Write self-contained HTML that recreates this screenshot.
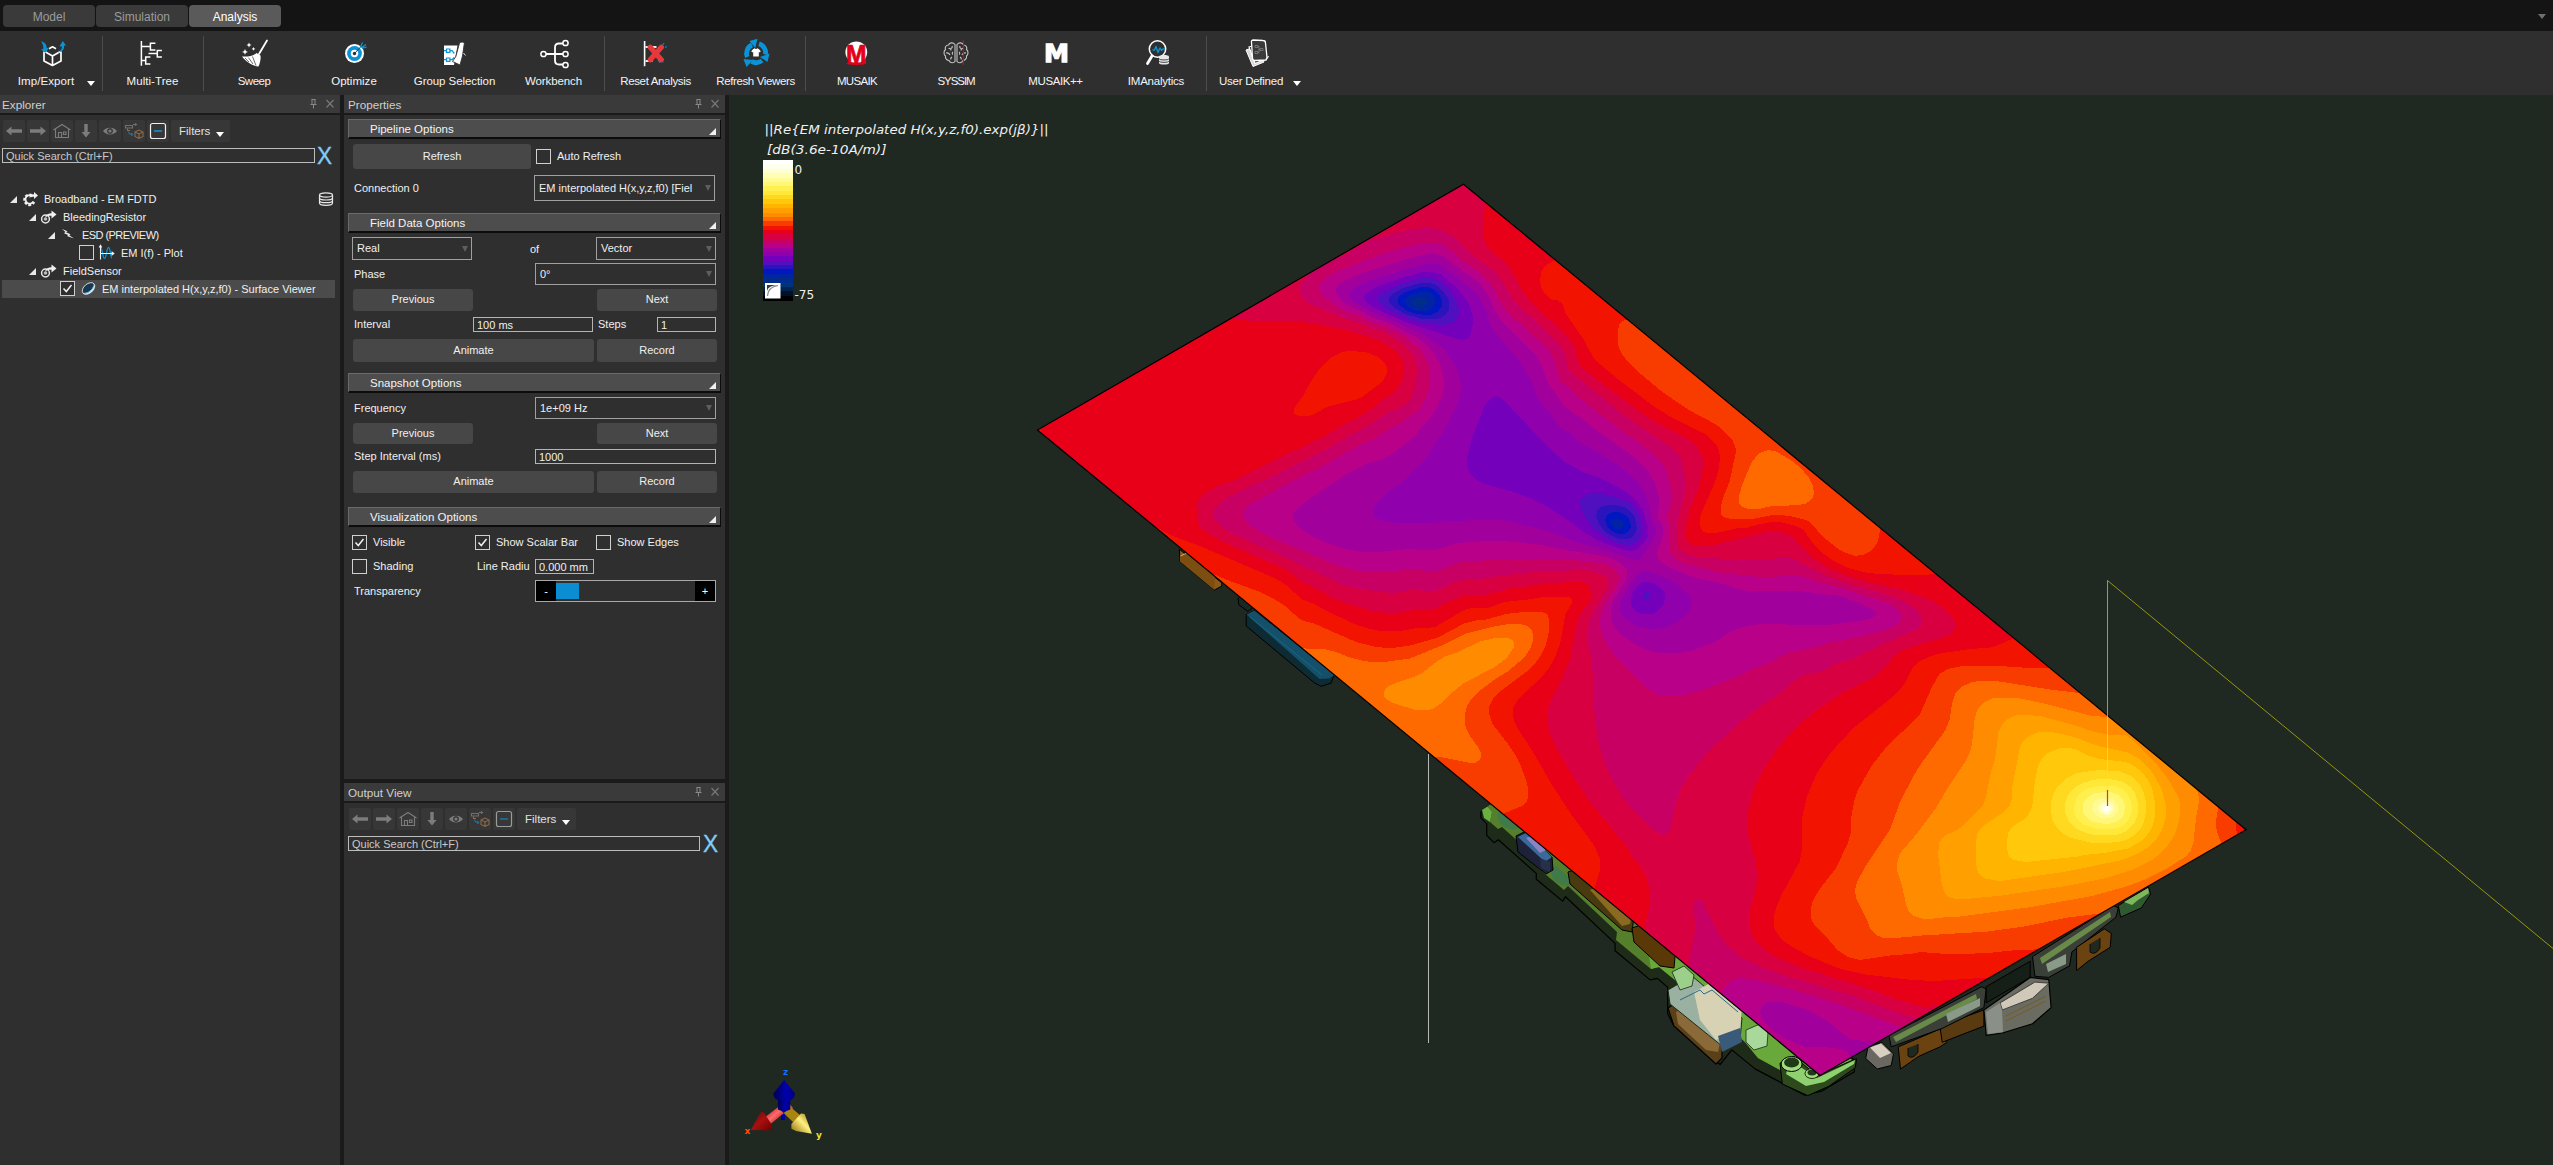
<!DOCTYPE html>
<html lang="en"><head><meta charset="utf-8"><title>Analysis</title>
<style>
*{box-sizing:border-box;margin:0;padding:0}
html,body{width:2553px;height:1165px;overflow:hidden;background:#2f2f2f}
body{position:relative;font-family:"Liberation Sans",sans-serif;font-size:11px;color:#f0f0f0;line-height:14px}
.a{position:absolute;white-space:nowrap}
.topbar{left:0;top:0;width:2553px;height:31px;background:#141414}
.tab{top:5px;height:22px;width:92px;border-radius:4px;background:#3a3a3a;color:#9c9c9c;text-align:center;line-height:24px;font-size:12px}
.tab.on{background:#5a5a5a;color:#fff}
.tool{top:31px;left:0;width:2553px;height:64px;background:#2f2f2f}
.sep{top:36px;width:1px;height:55px;background:#4c4c4c}
.tl{top:74px;height:14px;text-align:center;font-size:11.5px;color:#f4f4f4;transform:translateX(-50%)}
.ic{overflow:visible}
.title{height:18px;background:#3a3a3a;color:#cfcfcf;line-height:20px;padding-left:2px;font-size:11.7px}
.dark{background:#1a1a1a}
.ib{width:22px;height:22px;background:#373737;border-radius:2px}
.hdr{left:348px;width:373px;height:20px;background:#4d4d4d;border-top:1px solid #6a6a6a;border-left:1px solid #6a6a6a;border-bottom:2px solid #0c0c0c;border-right:1px solid #0c0c0c;line-height:18.5px;padding-left:21px;color:#f4f4f4;font-size:11.5px}
.hdr:after{content:"";position:absolute;right:4px;bottom:2px;border-left:7px solid transparent;border-bottom:7px solid #f0f0f0}
.btn{background:#474747;border-radius:3px;text-align:center;color:#f0f0f0;font-size:11px}
.cmb{border:1px solid #a0a0a0;background:#2f2f2f;padding-left:4px;color:#f0f0f0}
.cmb:after{content:"";position:absolute;right:3px;top:50%;margin-top:-3px;border-left:3.5px solid transparent;border-right:3.5px solid transparent;border-top:6px solid #5e5e5e}
.inp{border:1px solid #b4b4b4;background:#2f2f2f;padding-left:3px;color:#f0f0f0}
.cb{width:15px;height:15px;border:1px solid #d0d0d0;background:#2f2f2f}
.lbl{color:#f0f0f0;height:14px;line-height:14px}
.arr{width:0;height:0;border-left:6px solid transparent;border-bottom:6px solid #e8e8e8}
.dd{width:0;height:0;border-left:4.5px solid transparent;border-right:4.5px solid transparent;border-top:5px solid #fff}
.row{height:18px;line-height:18px;color:#f0f0f0}
</style></head><body>
<div class="a topbar"></div>
<div class="a tab" style="left:3px">Model</div>
<div class="a tab" style="left:96px">Simulation</div>
<div class="a tab on" style="left:189px">Analysis</div>
<div class="a dd" style="left:2538px;top:14px;border-top-color:#707070"></div>
<div class="a tool"></div>
<div class="a sep" style="left:102px"></div>
<div class="a sep" style="left:203px"></div>
<div class="a sep" style="left:604px"></div>
<div class="a sep" style="left:805px"></div>
<div class="a sep" style="left:1206px"></div>
<div class="a tl" style="left:46px;letter-spacing:0.11px">Imp/Export</div><div class="a dd" style="left:87px;top:81px"></div>
<div class="a tl" style="left:152.5px;letter-spacing:0.05px">Multi-Tree</div>
<div class="a tl" style="left:254px;letter-spacing:-0.52px">Sweep</div>
<div class="a tl" style="left:354px;letter-spacing:0.04px">Optimize</div>
<div class="a tl" style="left:454.5px;letter-spacing:-0.07px">Group Selection</div>
<div class="a tl" style="left:553.5px;letter-spacing:-0.11px">Workbench</div>
<div class="a tl" style="left:655.5px;letter-spacing:-0.34px">Reset Analysis</div>
<div class="a tl" style="left:755.5px;letter-spacing:-0.37px">Refresh Viewers</div>
<div class="a tl" style="left:857px;letter-spacing:-0.67px">MUSAIK</div>
<div class="a tl" style="left:956px;letter-spacing:-1.05px">SYSSIM</div>
<div class="a tl" style="left:1055.5px;letter-spacing:-0.4px">MUSAIK++</div>
<div class="a tl" style="left:1156px;letter-spacing:-0.23px">IMAnalytics</div>
<div class="a tl" style="left:1251px;letter-spacing:-0.25px">User Defined</div><div class="a dd" style="left:1293px;top:81px"></div>
<!-- toolbar icons -->
<svg class="a ic" style="left:38px;top:39px" width="30" height="30" viewBox="0 0 30 30">
 <path d="M6 12.500 V22 L14.500 26.500 L23 22 V12.500 M6.200 12.300 L14.500 17 L22.800 12.300 M14.500 17 V26 M11 9.700 L14.500 7.800 L18 9.700" fill="none" stroke="#fff" stroke-width="1.700" stroke-linejoin="round"/>
 <path d="M3 2.200 C7.500 3.500 9 6.500 8.700 9.300 L10.800 8.800 L7.300 14 L3 10.300 L5.300 9.900 C5.600 7.500 5 4.800 3 2.200 Z" fill="#0a93d6"/>
 <path d="M19.500 13.800 C23 12 24.200 9.500 23.800 7.200 L21.400 7.600 L24.800 2 L28 6.500 L26 6.800 C26.500 10 24.500 13 19.500 13.800 Z" fill="#0a93d6"/>
</svg>
<svg class="a ic" style="left:138px;top:39px" width="28" height="30" viewBox="0 0 28 30">
 <path d="M3.400 2.100 V26.800 M3.400 7.600 H11.700 M17.400 4.200 H12.400 V10.900 H17.400 M10.500 14.600 H18.600 M23.900 11.400 H19.300 V18 H23.900 M3.400 21.500 H7.400 M12.400 18 H7.700 V24.900 H12.400" fill="none" stroke="#fff" stroke-width="1.500"/>
</svg>
<svg class="a ic" style="left:240px;top:39px" width="30" height="30" viewBox="0 0 30 30">
 <path d="M27 1.5 L19 15" stroke="#fff" stroke-width="1.8" fill="none" stroke-linecap="round"/>
 <path d="M16.5 14 L20.5 16.5 C21 20 20 24 18.5 27.5 C13 27 6 23 2 17.5 C7 18 13 17 16.5 14 Z" fill="#fff"/>
 <path d="M5 19 L9 23 M8.5 18.7 L13 25 M12.5 17.5 L16 26.5" stroke="#2f2f2f" stroke-width="0.7" fill="none"/>
 <path d="M9 3.5 l0.8 1.7 1.7 0.8 -1.7 0.8 -0.8 1.7 -0.8 -1.7 -1.7 -0.8 1.7 -0.8z M5 10 l0.9 2 2 0.9 -2 0.9 -0.9 2 -0.9 -2 -2 -0.9 2 -0.9z M13.5 8 l0.6 1.3 1.3 0.6 -1.3 0.6 -0.6 1.3 -0.6 -1.3 -1.3 -0.6 1.3 -0.6z" fill="#fff"/>
</svg>
<svg class="a ic" style="left:340px;top:39px" width="30" height="30" viewBox="0 0 30 30">
 <circle cx="14.500" cy="14.500" r="9.500" fill="#fff"/>
 <circle cx="14.500" cy="14.500" r="7.400" fill="#0a93d6"/>
 <circle cx="14.500" cy="14.500" r="3.700" fill="#fff"/>
 <circle cx="14.500" cy="14.500" r="1.700" fill="#2f2f2f"/>
 <path d="M14.500 14.500 L21.500 7" stroke="#2f2f2f" stroke-width="0.900" fill="none"/>
 <path d="M20.500 8 L22.500 3.500 M21.500 8.500 L26 5.500 M22 9 L26.500 8.200" stroke="#0a93d6" stroke-width="1.300" fill="none"/>
</svg>
<svg class="a ic" style="left:440px;top:39px" width="30" height="30" viewBox="0 0 30 30">
 <path d="M4 6.500 H17.500 L14 26 H4 Z" fill="#fff"/>
 <path d="M19.500 4 C21 2.700 23.500 2.700 24.300 4.500 L22.500 17 L20 26 L12.500 22.500 L15.800 17.500 Z" fill="#fff" stroke="#2f2f2f" stroke-width="0.900"/>
 <path d="M23.500 14 L25.500 16.500" stroke="#ddd" stroke-width="1" fill="none"/>
 <path d="M6.500 10 h3.400 v3.400 h-3.400 z M6.500 19 h3.400 v3.400 h-3.400 z M9.900 11.700 H12 L14.300 14.500 M9.900 20.700 H12 L14.300 18.500 M4 11.700 H6.500 M4 20.700 H6.500" fill="none" stroke="#0a93d6" stroke-width="1.200"/>
</svg>
<svg class="a ic" style="left:539px;top:38px" width="32" height="32" viewBox="0 0 32 32">
 <path d="M6 16 H26 M25 5.500 H20 C17.5 5.5 16 7 16 9.500 V22.5 C16 25 17.5 26.500 20 26.500 H25" fill="none" stroke="#fff" stroke-width="1.8"/>
 <circle cx="4.500" cy="16" r="2.6" fill="#2f2f2f" stroke="#fff" stroke-width="1.5"/>
 <circle cx="26.500" cy="5" r="2.6" fill="#2f2f2f" stroke="#fff" stroke-width="1.5"/>
 <circle cx="26.500" cy="16" r="2.6" fill="#2f2f2f" stroke="#fff" stroke-width="1.5"/>
 <circle cx="26.500" cy="27" r="2.6" fill="#2f2f2f" stroke="#fff" stroke-width="1.5"/>
</svg>
<svg class="a ic" style="left:640px;top:39px" width="30" height="30" viewBox="0 0 30 30">
 <path d="M4.600 2 V27.200" stroke="#fff" stroke-width="1.600" fill="none"/>
 <path d="M5.500 7 H16.500 V9 H5.500 Z M5.500 21 H12.500 V23 H5.500 Z" fill="#e8e8e8"/>
 <path d="M22.500 6.500 L24 4 M25 8.500 L27 7.500 M21 19 L23 23.500 M18 21 L20 24" stroke="#0a93d6" stroke-width="1" fill="none"/>
 <path d="M10.200 8.200 L21.300 20.800 M21.300 8.200 L10.200 20.800" stroke="#e8383c" stroke-width="5.200" fill="none" stroke-linecap="round"/>
</svg>
<svg class="a ic" style="left:741px;top:38px" width="32" height="32" viewBox="0 0 32 32">
 <g fill="none" stroke="#0a93d6" stroke-width="4.800">
  <path d="M6.300 19 A9.200 9.200 0 0 1 11 7"/>
  <path d="M18 5.800 A9.200 9.200 0 0 1 24.400 16.500"/>
  <path d="M21 22.500 A9.200 9.200 0 0 1 10.500 23.400"/>
 </g>
 <path d="M8.500 3 L16.500 0.800 L14.200 10 Z M28.500 15.500 L26.500 24 L19 19 Z M5.500 29 L2.500 21 L12 22 Z" fill="#0a93d6"/>
 <path d="M12 11.200 L13.700 10.300 C14.300 11.300 15.700 11.300 16.300 10.300 L18 11.200 L19.800 13.200 L18.500 14.400 L17.800 13.800 V18.600 H12.200 V13.800 L11.500 14.400 L10.200 13.200 Z" fill="#fff"/>
</svg>
<svg class="a ic" style="left:842px;top:39px" width="30" height="30" viewBox="0 0 30 30">
 <circle cx="14.300" cy="13.300" r="10.900" fill="#fff"/>
 <ellipse cx="14.300" cy="24.600" rx="10.200" ry="1.300" fill="#e2001a"/>
 <text x="14.300" y="24.400" text-anchor="middle" font-family="Liberation Sans, sans-serif" font-weight="700" font-size="25" fill="#e2001a" stroke="#e2001a" stroke-width="0.700" textLength="20.500" lengthAdjust="spacingAndGlyphs">M</text>
</svg>
<svg class="a ic" style="left:941px;top:39px" width="30" height="30" viewBox="0 0 30 30">
 <g fill="none" stroke="#c4c4c4" stroke-width="1.1">
  <path d="M14 5.500 C12 3 8.500 3.500 7.500 6 C5 6 3.500 8.500 4.500 10.500 C2.500 12 2.500 15.500 4.500 17 C4 19.500 6 21.500 8 21.500 C9 24 12.500 24.500 14 22.500 Z"/>
  <path d="M16 5.500 C18 3 21.500 3.500 22.500 6 C25 6 26.500 8.500 25.500 10.500 C27.500 12 27.500 15.500 25.500 17 C26 19.500 24 21.500 22 21.500 C21 24 17.500 24.500 16 22.500 Z"/>
  <path d="M7.500 9.500 C9 9 10 10 10 11.500 M5 14 C7 13.500 8.500 14.500 9 16 M11 18 C10 18.500 9.500 19.500 10 20.500 M11 7 C11.500 8 11 9 10 9.500 M12 13 C11 13.500 11 15 12 15.500"/>
  <path d="M22.500 9.500 C21 9 20 10 20 11.500 M25 14 C23 13.500 21.500 14.500 21 16 M19 18 C20 18.500 20.500 19.500 20 20.500 M19 7 C18.500 8 19 9 20 9.500 M18 13 C19 13.500 19 15 18 15.500"/>
 </g>
 <path d="M22.400 1 V26" stroke="#e2001a" stroke-width="1.100" fill="none"/>
</svg>
<svg class="a ic" style="left:1040px;top:39px" width="34" height="30" viewBox="0 0 34 30">
 <text x="16.600" y="23.200" text-anchor="middle" font-family="DejaVu Sans, Liberation Sans, sans-serif" font-weight="700" font-size="25.500" fill="#fff" textLength="25" lengthAdjust="spacingAndGlyphs" stroke="#fff" stroke-width="1.300" stroke-linejoin="miter">M</text>
</svg>
<svg class="a ic" style="left:1144px;top:38px" width="30" height="32" viewBox="0 0 30 32">
 <circle cx="13.500" cy="11" r="8.200" fill="none" stroke="#fff" stroke-width="1.500"/>
 <path d="M8 18 L3.500 25.500" stroke="#fff" stroke-width="2.800" fill="none" stroke-linecap="round"/>
 <path d="M8.500 12 H10.500 L12 8.500 L14 14.500 L16 10 L17.500 12.500 L19 11 H21" fill="none" stroke="#0a93d6" stroke-width="1.400" stroke-linejoin="round"/>
 <path d="M15 18.500 C15 16.500 25 16.500 25 18.500 V25 C25 27 15 27 15 25 Z" fill="#e8e8e8"/>
 <path d="M15 20.600 C15 22.400 25 22.400 25 20.600 M15 23 C15 24.800 25 24.800 25 23" fill="none" stroke="#2f2f2f" stroke-width="0.900"/>
</svg>
<svg class="a ic" style="left:1242px;top:38px" width="32" height="32" viewBox="0 0 32 32">
 <path d="M4 12 L15 8 L22 24 L11 28.500 Z" fill="#d8d8d8" stroke="#fff" stroke-width="1"/>
 <path d="M7 9 L18 5.500 L24 21 L13 25.500 Z" fill="#2f2f2f" stroke="#fff" stroke-width="1.200"/>
 <path d="M9.500 4.500 C9 3 10 2 11.500 2 L21 2.500 C22.500 2.500 23.500 3.500 23.500 5 L25 19.500 L24 22 L13 22.500 C11.500 22.500 10.500 21.500 10.500 20 Z" fill="#3a3a3a" stroke="#fff" stroke-width="1.300"/>
 <path d="M13 7.500 h3 v2 h-3 z M18 10.500 h3 v2 h-3 z M13 13.500 h3 v2 h-3 z M16 8.500 H17 V14.500 H16 M17 11.500 H18" fill="none" stroke="#888" stroke-width="0.700"/>
 <path d="M24 22 L26.500 18.500 L25 19.500" fill="none" stroke="#fff" stroke-width="1"/>
</svg>
<!-- Explorer -->
<div class="a title" style="left:0;top:95px;width:340px">Explorer</div>
<div class="a dark" style="left:0;top:113px;width:340px;height:2px"></div>
<div class="a dark" style="left:340px;top:95px;width:4px;height:1070px"></div>
<svg class="a ic" style="left:307px;top:98px" width="30" height="12" viewBox="0 0 30 12">
 <path d="M4.500 1.500 H8.500 M5 1.500 V6.500 H8 V1.500 M3.500 6.500 H9.500 M6.500 6.500 V10.500" fill="none" stroke="#8a8a8a" stroke-width="1"/>
 <path d="M19.500 2 L26.500 9.500 M26.500 2 L19.500 9.500" fill="none" stroke="#7a7a7a" stroke-width="1.100"/>
</svg>
<div class="a ib" style="left:3px;top:120px"></div>
<div class="a ib" style="left:27px;top:120px"></div>
<div class="a ib" style="left:51px;top:120px"></div>
<div class="a ib" style="left:75px;top:120px"></div>
<div class="a ib" style="left:99px;top:120px"></div>
<div class="a ib" style="left:123px;top:120px"></div>
<div class="a ib" style="left:147px;top:120px"></div>
<div class="a ib" style="left:171px;top:120px;width:59px"></div>
<svg class="a ic" style="left:3px;top:120px" width="170" height="22" viewBox="0 0 170 22">
 <g fill="#7c7c7c">
  <path d="M3 11 L8.500 6.500 V9.300 H19 V12.700 H8.500 V15.500 Z"/>
  <path d="M43 11 L37.500 6.500 V9.300 H27 V12.700 H37.500 V15.500 Z"/>
  <path d="M83 17.500 L78.500 12 H81.300 V4 H84.700 V12 H87.500 Z"/>
  <path d="M100 11 C103 6.500 111 6.500 114 11 C111 15.500 103 15.500 100 11 Z M107 8 A3 3 0 1 0 107.010 8 Z"/>
  <circle cx="107" cy="11" r="1.600"/>
 </g>
 <g fill="none" stroke="#7c7c7c" stroke-width="1.100">
  <path d="M50.500 10 L59 4.500 L67.500 10 M52.500 9.500 V17.500 H65.500 V9.500 M55.500 17.500 V12.500 H58.500 V17.500 M60.500 12 h2.500 v2.500 h-2.500 z"/>
  <path d="M122.500 5.500 h7 v2.500 h-7 z M130 4.500 H133 M132 3.500 L133.500 4.500 L132 5.500" stroke="#707070"/>
  <path d="M132 12 L136 10 L140 12 V16.500 L136 18.500 L132 16.500 Z M132 12 L136 14 L140 12 M136 14 V18.500" stroke="#8a6a48"/>
  <path d="M124.500 8.500 V10.500 H127" stroke="#9a6a3a"/>
  <path d="M125.500 11.500 C125.500 14 127.500 14.500 129.500 14.500 M128.300 13.200 L129.800 14.500 L128.300 15.800" stroke="#2a6f96"/>
 </g>
 <rect x="147.500" y="3.500" width="15" height="15" rx="2" fill="none" stroke="#f0f0f0" stroke-width="1.200"/>
 <path d="M151 11 H159" stroke="#0a93d6" stroke-width="1.600" fill="none"/>
</svg>
<div class="a" style="left:179px;top:124px;font-size:11.500px;color:#e0e0e0">Filters</div>
<div class="a dd" style="left:216px;top:132px"></div>

<div class="a inp" style="left:2px;top:148px;width:313px;height:15px;line-height:14px;color:#c9c9c9;border-color:#bdbdbd">Quick Search (Ctrl+F)</div>
<div class="a" style="left:317px;top:144px;font-size:24px;line-height:24px;color:#80ccf6;-webkit-text-stroke:0.35px #80ccf6;transform:scaleX(0.94);transform-origin:0 0">X</div>
<div class="a" style="left:2px;top:280px;width:333px;height:18px;background:#4b4b4b"></div>
<div class="a arr" style="left:10px;top:196px;border-left-width:7px;border-bottom-width:7px"></div>
<div class="a arr" style="left:29px;top:214px;border-left-width:7px;border-bottom-width:7px"></div>
<div class="a arr" style="left:48px;top:232px;border-left-width:7px;border-bottom-width:7px"></div>
<div class="a arr" style="left:29px;top:268px;border-left-width:7px;border-bottom-width:7px"></div>
<div class="a row" style="left:44px;top:190px">Broadband - EM FDTD</div>
<div class="a row" style="left:63px;top:208px">BleedingResistor</div>
<div class="a row" style="left:82px;top:226px;letter-spacing:-0.55px">ESD (PREVIEW)</div>
<div class="a row" style="left:121px;top:244px">EM I(f) - Plot</div>
<div class="a row" style="left:63px;top:262px">FieldSensor</div>
<div class="a row" style="left:102px;top:280px">EM interpolated H(x,y,z,f0) - Surface Viewer</div>
<div class="a cb" style="left:79px;top:245px"></div>
<div class="a cb" style="left:60px;top:281px"></div>
<svg class="a ic" style="left:60px;top:281px" width="15" height="15" viewBox="0 0 15 15"><path d="M3.500 7.500 L6.300 10.500 L11.500 4" fill="none" stroke="#f0f0f0" stroke-width="1.500"/></svg>
<!-- tree icons -->
<svg class="a ic" style="left:22px;top:191px" width="17" height="17" viewBox="0 0 17 17">
 <path d="M10 4.500 A5 5 0 1 0 12 11" fill="none" stroke="#f0f0f0" stroke-width="2.600" stroke-dasharray="2.600 1.600"/>
 <path d="M10.500 5 A4.300 4.300 0 1 0 11.500 10.500" fill="none" stroke="#f0f0f0" stroke-width="1.800"/>
 <path d="M7 6.500 C8 4 10 3.300 12 3.300 V1 L16 4.500 L12 8 V5.800 C10.500 5.800 9 6 7 6.500 Z" fill="#f0f0f0"/>
</svg>
<svg class="a ic" style="left:40px;top:209px" width="18" height="17" viewBox="0 0 18 17">
 <circle cx="5.500" cy="10" r="3.900" fill="none" stroke="#e8e8e8" stroke-width="1.500"/>
 <circle cx="5.500" cy="10" r="1.800" fill="#bdbdbd"/>
 <path d="M5 8.500 C6 5.500 8.500 4.300 11.500 4.300 V1.500 L16.500 5.500 L11.500 9.500 V6.800 C9 6.800 7 7.200 5 8.500 Z" fill="#f0f0f0"/>
</svg>
<svg class="a ic" style="left:40px;top:263px" width="18" height="17" viewBox="0 0 18 17">
 <circle cx="5.500" cy="10" r="3.900" fill="none" stroke="#e8e8e8" stroke-width="1.500"/>
 <circle cx="5.500" cy="10" r="1.800" fill="#bdbdbd"/>
 <path d="M5 8.500 C6 5.500 8.500 4.300 11.500 4.300 V1.500 L16.500 5.500 L11.500 9.500 V6.800 C9 6.800 7 7.200 5 8.500 Z" fill="#f0f0f0"/>
</svg>
<svg class="a ic" style="left:61px;top:228px" width="14" height="12" viewBox="0 0 14 12">
 <path d="M1 1 L6.500 3.200 L5 4.300 L9.500 6.200 L8.200 7.200 L13 10.500 L6 8 L7.300 7 L3 5.200 L4.500 4 Z" fill="#f0f0f0"/>
</svg>
<svg class="a ic" style="left:98px;top:245px" width="17" height="16" viewBox="0 0 17 16">
 <path d="M3 3.500 C4.500 3.500 4.500 13.500 6.500 13.500 C8.500 13.500 8.500 2.500 10.500 2.500 C12.500 2.500 12.500 13 14 13" fill="none" stroke="#0a93d6" stroke-width="1.300"/>
 <path d="M2.500 0.500 V14.500 M2.500 8.500 H15.500 M13.500 6.800 L15.800 8.500 L13.500 10.200 M1.200 2.500 L2.500 0.300 L3.800 2.500" fill="none" stroke="#f0f0f0" stroke-width="1.100"/>
</svg>
<svg class="a ic" style="left:81px;top:281px" width="15" height="15" viewBox="0 0 15 15">
 <ellipse cx="7.500" cy="7.500" rx="7.200" ry="4.600" transform="rotate(-40 7.500 7.500)" fill="#17384f" stroke="#f0f0f0" stroke-width="0.800"/>
 <path d="M1.800 11.800 C3.500 14.500 9 13.500 12 9.500 C14 6.800 14 4 13 2.800 C13 6 11 9.500 7.500 11.300 C5.500 12.300 3.300 12.500 1.800 11.800 Z" fill="#d4ecfa"/>
 <path d="M3.500 12.200 C7 12.200 11.500 9 12.800 4.500" fill="none" stroke="#5fb6e6" stroke-width="1"/>
</svg>
<svg class="a ic" style="left:318px;top:192px" width="16" height="14" viewBox="0 0 16 14">
 <g fill="none" stroke="#e8e8e8" stroke-width="1.200">
 <ellipse cx="8" cy="3" rx="6.500" ry="2.200"/>
 <path d="M1.500 3 V11 C1.500 12.500 4.500 13.300 8 13.300 C11.500 13.300 14.500 12.500 14.500 11 V3"/>
 <path d="M1.500 5.700 C1.500 7.200 4.500 8 8 8 C11.500 8 14.500 7.200 14.500 5.700 M1.500 8.400 C1.500 9.900 4.500 10.700 8 10.700 C11.500 10.700 14.500 9.900 14.500 8.400"/>
 </g>
</svg>
<!-- Properties -->
<div class="a title" style="left:344px;top:95px;width:381px;padding-left:4px">Properties</div>
<div class="a dark" style="left:344px;top:113px;width:381px;height:2px"></div>
<div class="a dark" style="left:725px;top:95px;width:4px;height:1070px"></div>
<svg class="a ic" style="left:692px;top:98px" width="30" height="12" viewBox="0 0 30 12">
 <path d="M4.500 1.500 H8.500 M5 1.500 V6.500 H8 V1.500 M3.500 6.500 H9.500 M6.500 6.500 V10.500" fill="none" stroke="#8a8a8a" stroke-width="1"/>
 <path d="M19.500 2 L26.500 9.500 M26.500 2 L19.500 9.500" fill="none" stroke="#7a7a7a" stroke-width="1.100"/>
</svg>
<div class="a hdr" style="top:119px">Pipeline Options</div>
<div class="a btn" style="left:353px;top:144px;width:178px;height:25px;line-height:25px">Refresh</div>
<div class="a cb" style="left:536px;top:149px"></div>
<div class="a lbl" style="left:557px;top:149px">Auto Refresh</div>
<div class="a lbl" style="left:354px;top:181px">Connection 0</div>
<div class="a cmb" style="left:534px;top:175px;width:181px;height:26px;line-height:24px">EM interpolated H(x,y,z,f0) [Fiel</div>
<div class="a hdr" style="top:213px">Field Data Options</div>
<div class="a cmb" style="left:352px;top:237px;width:120px;height:23px;line-height:21px">Real</div>
<div class="a lbl" style="left:530px;top:242px">of</div>
<div class="a cmb" style="left:596px;top:237px;width:120px;height:23px;line-height:21px">Vector</div>
<div class="a lbl" style="left:354px;top:267px">Phase</div>
<div class="a cmb" style="left:535px;top:263px;width:181px;height:22px;line-height:20px">0°</div>
<div class="a btn" style="left:353px;top:289px;width:120px;height:22px;line-height:21px">Previous</div>
<div class="a btn" style="left:597px;top:289px;width:120px;height:22px;line-height:21px">Next</div>
<div class="a lbl" style="left:354px;top:317px">Interval</div>
<div class="a inp" style="left:473px;top:317px;width:120px;height:15px;line-height:14px">100 ms</div>
<div class="a lbl" style="left:598px;top:317px">Steps</div>
<div class="a inp" style="left:657px;top:317px;width:59px;height:15px;line-height:14px">1</div>
<div class="a btn" style="left:353px;top:339px;width:241px;height:23px;line-height:22px">Animate</div>
<div class="a btn" style="left:597px;top:339px;width:120px;height:23px;line-height:22px">Record</div>
<div class="a hdr" style="top:373px">Snapshot Options</div>
<div class="a lbl" style="left:354px;top:401px">Frequency</div>
<div class="a cmb" style="left:535px;top:397px;width:181px;height:22px;line-height:20px">1e+09 Hz</div>
<div class="a btn" style="left:353px;top:423px;width:120px;height:21px;line-height:20px">Previous</div>
<div class="a btn" style="left:597px;top:423px;width:120px;height:21px;line-height:20px">Next</div>
<div class="a lbl" style="left:354px;top:449px">Step Interval (ms)</div>
<div class="a inp" style="left:535px;top:449px;width:181px;height:15px;line-height:14px">1000</div>
<div class="a btn" style="left:353px;top:471px;width:241px;height:22px;line-height:21px">Animate</div>
<div class="a btn" style="left:597px;top:471px;width:120px;height:22px;line-height:21px">Record</div>
<div class="a hdr" style="top:507px">Visualization Options</div>
<div class="a cb" style="left:352px;top:535px"></div>
<svg class="a ic" style="left:352px;top:535px" width="15" height="15" viewBox="0 0 15 15"><path d="M3.500 7.500 L6.300 10.500 L11.500 4" fill="none" stroke="#f0f0f0" stroke-width="1.500"/></svg>
<div class="a lbl" style="left:373px;top:535px">Visible</div>
<div class="a cb" style="left:475px;top:535px"></div>
<svg class="a ic" style="left:475px;top:535px" width="15" height="15" viewBox="0 0 15 15"><path d="M3.500 7.500 L6.300 10.500 L11.500 4" fill="none" stroke="#f0f0f0" stroke-width="1.500"/></svg>
<div class="a lbl" style="left:496px;top:535px">Show Scalar Bar</div>
<div class="a cb" style="left:596px;top:535px"></div>
<div class="a lbl" style="left:617px;top:535px">Show Edges</div>
<div class="a cb" style="left:352px;top:559px"></div>
<div class="a lbl" style="left:373px;top:559px">Shading</div>
<div class="a lbl" style="left:477px;top:559px">Line Radiu</div>
<div class="a inp" style="left:535px;top:559px;width:59px;height:15px;line-height:14px">0.000 mm</div>
<div class="a lbl" style="left:354px;top:584px">Transparency</div>
<div class="a" style="left:535px;top:580px;width:181px;height:22px;border:1px solid #a8a8a8;background:#2f2f2f"></div>
<div class="a" style="left:536px;top:581px;width:20px;height:20px;background:#000;text-align:center;line-height:20px;color:#fff">-</div>
<div class="a" style="left:695px;top:581px;width:20px;height:20px;background:#000;text-align:center;line-height:20px;color:#fff">+</div>
<div class="a" style="left:556px;top:583px;width:23px;height:16px;background:#0a8ed1"></div>
<div class="a dark" style="left:344px;top:779px;width:381px;height:4px"></div>
<!-- Output View -->
<div class="a title" style="left:344px;top:783px;width:381px;padding-left:4px">Output View</div>
<div class="a dark" style="left:344px;top:801px;width:381px;height:2px"></div>
<svg class="a ic" style="left:692px;top:786px" width="30" height="12" viewBox="0 0 30 12">
 <path d="M4.500 1.500 H8.500 M5 1.500 V6.500 H8 V1.500 M3.500 6.500 H9.500 M6.500 6.500 V10.500" fill="none" stroke="#8a8a8a" stroke-width="1"/>
 <path d="M19.500 2 L26.500 9.500 M26.500 2 L19.500 9.500" fill="none" stroke="#7a7a7a" stroke-width="1.100"/>
</svg>
<div class="a ib" style="left:349px;top:808px"></div>
<div class="a ib" style="left:373px;top:808px"></div>
<div class="a ib" style="left:397px;top:808px"></div>
<div class="a ib" style="left:421px;top:808px"></div>
<div class="a ib" style="left:445px;top:808px"></div>
<div class="a ib" style="left:469px;top:808px"></div>
<div class="a ib" style="left:493px;top:808px"></div>
<div class="a ib" style="left:517px;top:808px;width:59px"></div>
<svg class="a ic" style="left:349px;top:808px" width="170" height="22" viewBox="0 0 170 22">
 <g fill="#7c7c7c">
  <path d="M3 11 L8.500 6.500 V9.300 H19 V12.700 H8.500 V15.500 Z"/>
  <path d="M43 11 L37.500 6.500 V9.300 H27 V12.700 H37.500 V15.500 Z"/>
  <path d="M83 17.500 L78.500 12 H81.300 V4 H84.700 V12 H87.500 Z"/>
  <path d="M100 11 C103 6.500 111 6.500 114 11 C111 15.500 103 15.500 100 11 Z M107 8 A3 3 0 1 0 107.010 8 Z"/>
  <circle cx="107" cy="11" r="1.600"/>
 </g>
 <g fill="none" stroke="#7c7c7c" stroke-width="1.100">
  <path d="M50.500 10 L59 4.500 L67.500 10 M52.500 9.500 V17.500 H65.500 V9.500 M55.500 17.500 V12.500 H58.500 V17.500 M60.500 12 h2.500 v2.500 h-2.500 z"/>
  <path d="M122.500 5.500 h7 v2.500 h-7 z M130 4.500 H133 M132 3.500 L133.500 4.500 L132 5.500" stroke="#707070"/>
  <path d="M132 12 L136 10 L140 12 V16.500 L136 18.500 L132 16.500 Z M132 12 L136 14 L140 12 M136 14 V18.500" stroke="#8a6a48"/>
  <path d="M124.500 8.500 V10.500 H127" stroke="#9a6a3a"/>
  <path d="M125.500 11.500 C125.500 14 127.500 14.500 129.500 14.500 M128.300 13.200 L129.800 14.500 L128.300 15.800" stroke="#2a6f96"/>
 </g>
 <rect x="147.500" y="3.500" width="15" height="15" rx="2" fill="none" stroke="#9a9a9a" stroke-width="1.200"/>
 <path d="M151 11 H159" stroke="#1f6f9a" stroke-width="1.600" fill="none"/>
</svg>
<div class="a" style="left:525px;top:812px;font-size:11.500px;color:#e0e0e0">Filters</div>
<div class="a dd" style="left:562px;top:820px"></div>

<div class="a inp" style="left:348px;top:836px;width:352px;height:15px;line-height:14px;color:#c9c9c9;border-color:#bdbdbd">Quick Search (Ctrl+F)</div>
<div class="a" style="left:703px;top:832px;font-size:24px;line-height:24px;color:#80ccf6;-webkit-text-stroke:0.35px #80ccf6;transform:scaleX(0.94);transform-origin:0 0">X</div>
<svg class="a" style="left:729px;top:95px" width="1824" height="1070" viewBox="729 95 1824 1070">
<rect x="729" y="95" width="1824" height="1070" fill="#202822"/>
<g stroke-linejoin="round">
<!-- left small parts -->
<polygon points="1179.4,549.4 1189,556.7 1221.8,582.8 1221.8,586 1214.4,590 1180,561.6" fill="#8a5a16" stroke="#000" stroke-width="1"/>
<polygon points="1180,556.500 1188.500,552 1215,573.500 1214.400,590 1180,561.600" fill="#7c4e12"/>
<path d="M1180.500 556 L1189 552" stroke="#d8c8a0" stroke-width="0.800" fill="none"/>
<polygon points="1238,598.3 1241.3,596.6 1252.7,608 1247.8,611.3 1238.9,604.8" fill="#182826" stroke="#000" stroke-width="1"/>
<polygon points="1246.2,614.6 1254.4,610.5 1334.3,674.9 1331,683.1 1321.2,686.3 1314.7,683.1 1246.2,626" fill="#0e2a32" stroke="#000" stroke-width="1"/>
<polygon points="1246.500,614.600 1254.400,610.500 1334.300,674.900 1329,678.500 1319.500,679" fill="#14506a"/>
<path d="M1250 617 L1322 675" stroke="#1a6686" stroke-width="1" fill="none"/>
<!-- bottom-left PCB: side wall then top -->
<polygon points="1480.9,812.1 1480.9,817.9 1486.7,823.8 1486.7,835.4 1494,842.7 1498.4,839.8 1536.3,873.4 1536.3,879.2 1562.6,901.1 1565.5,896.7 1615.1,943.4 1615.1,950.7 1650.1,979.9 1657.4,978.4 1667.6,987.2 1667.6,1013.4 1673.4,1025.1 1720.1,1064.5 1731.8,1049.9 1755.1,1068.9 1804.8,1095.1 1822.3,1090.8 1854.4,1071.8 1854.4,1060 1700,930 1500,800 1487,807" fill="#1f2b19" stroke="#000" stroke-width="1.200"/>
<polygon points="1482,810 1487.500,806.500 1492,812 1490,822 1498,829 1502,827 1540,861 1538,868 1564,890 1568,886 1617,932 1616,940 1651,969 1659,967 1670,976 1700,1000 1745,1042 1758,1058 1806,1084 1822,1080 1853,1061 1700,925 1500,798" fill="#567f2c"/>
<polygon points="1651,969 1659,967 1670,976 1700,1000 1745,1042 1758,1058 1806,1084 1822,1080 1853,1061 1700,925 1640,900" fill="#69a83a"/>
<polygon points="1482,810 1487.500,806.500 1492,812 1490,822 1484,818" fill="#6ab040"/>
<path d="M1498 812 Q1496 826 1512 830 L1520 828 L1500 810 Z" fill="#3f7a48"/>
<path d="M1552 868 Q1548 882 1566 886 L1574 882 L1556 866 Z" fill="#3f7a48"/>
<!-- bluish connector -->
<polygon points="1516,836 1524,832 1552,857 1553,870 1546,874 1518,852" fill="#1e2238" stroke="#000" stroke-width="1"/>
<polygon points="1518,837 1526,833 1552,857 1545,862" fill="#3a6a9a"/>
<polygon points="1526,838 1532,836 1546,850 1540,853" fill="#8a84c4"/>
<polygon points="1540,858 1550,862 1550,872 1541,868" fill="#26304a"/>
<!-- brown/olive parts along the plane edge -->
<polygon points="1568,872 1580,868 1634,916 1632,932 1622,930 1570,884" fill="#4a3a10" stroke="#000" stroke-width="1"/>
<polygon points="1590,890 1600,886 1632,914 1630,924 1622,926" fill="#8a6a20"/>
<polygon points="1632,928 1650,922 1676,946 1674,968 1660,966 1634,942" fill="#5a3808" stroke="#000" stroke-width="1"/>
<!-- USB connector -->
<polygon points="1668,1008 1680,1000 1722,1038 1722,1058 1716,1064 1674,1026" fill="#5a4018" stroke="#000" stroke-width="1.200"/>
<polygon points="1676,1012 1690,1004 1722,1034 1718,1052 1706,1050 1678,1024" fill="#8a6a38"/>
<polygon points="1668,990 1692,976 1742,1018 1740,1040 1722,1046 1670,1004" fill="#9ab0a0" stroke="#1a2a1a" stroke-width="1"/>
<polygon points="1694,992 1712,982 1742,1008 1740,1030 1716,1040 1700,1020" fill="#d8d2b4"/>
<path d="M1680 1000 L1700 990 L1704 994 L1712 990 L1738 1012" stroke="#2a6a8a" stroke-width="1" fill="none"/>
<polygon points="1718,1036 1740,1028 1742,1042 1722,1052" fill="#3a5a7a"/>
<polygon points="1672,972 1684,966 1694,975 1692,986 1680,990" fill="#9ccf8a" stroke="#1a2a1a" stroke-width="0.800"/>
<polygon points="1746,1030 1760,1024 1768,1032 1767,1046 1754,1050 1746,1042" fill="#a8d89a" stroke="#1a2a1a" stroke-width="0.800"/>
<!-- bottom-right green piece -->
<polygon points="1780,1063.2 1793.9,1056.2 1817.1,1075.9 1856.5,1058.5 1855.3,1067.8 1828.7,1086.3 1807.8,1095.6 1782.3,1084" fill="#2c4a1c" stroke="#000" stroke-width="1"/>
<polygon points="1790,1060 1817,1078 1855,1060 1854,1064 1824,1082 1806,1086 1786,1074" fill="#8fd070"/>
<!-- holes -->
<ellipse cx="1791.600" cy="1064" rx="10.500" ry="7.500" fill="#9fdc7c" stroke="#000" stroke-width="1"/>
<ellipse cx="1791.600" cy="1062.500" rx="7.500" ry="5" fill="#1e3a16"/>
<ellipse cx="1812" cy="1073.500" rx="7" ry="5" fill="#9fdc7c" stroke="#000" stroke-width="0.800"/>
<ellipse cx="1812" cy="1072.500" rx="4.500" ry="3" fill="#1e3a16"/>
<!-- bottom-right components -->
<polygon points="1868,1046.9 1881.9,1042.3 1893.5,1053.9 1891.2,1065.5 1877.3,1069 1865.7,1058.5" fill="#6a6860" stroke="#000" stroke-width="1"/>
<polygon points="1870,1047.500 1881,1043.500 1891,1053 1880,1058" fill="#d8d0c0"/>
<polygon points="1898.2,1046.9 1946.8,1026.1 1946.8,1042.3 1939.9,1046.9 1919,1056.2 1900.5,1069" fill="#6b4310" stroke="#000" stroke-width="1"/>
<path d="M1908 1048 V1056 Q1913 1060 1918 1052 V1044" fill="#202822" stroke="#000" stroke-width="0.800"/>
<polygon points="1939.9,1026.1 1983.9,1009.9 1983.9,1026.1 1942.2,1042.3" fill="#5a3a10" stroke="#000" stroke-width="1"/>
<polygon points="1888.9,1035.4 1981.6,986.7 1986.2,989 1983.9,1007.6 1942.2,1028.4 1891.2,1046.9" fill="#3a3f38" stroke="#000" stroke-width="1"/>
<polygon points="1893,1037 1976,994 1977,999 1896,1042" fill="#6a8a4a"/>
<polygon points="1946,1014 1980,998 1980,1006 1948,1022" fill="#8a9a88"/>
<polygon points="1986.2,986.7 2030.2,961.2 2030.2,977.4 1986.2,1002.9" fill="#161e18" stroke="#000" stroke-width="1"/>
<polygon points="1983.9,1009.9 2030.2,977.4 2048.8,979.7 2051.1,1007.6 2032.5,1023.8 2002.4,1033 1986.2,1035.4" fill="#6a6c62" stroke="#000" stroke-width="1.200"/>
<polygon points="2000.1,1002.9 2034.9,982.1 2048.8,983.2 2032.5,998.3 2002.4,1009.9" fill="#d0c8b8" stroke="#2a2a2a" stroke-width="0.800"/>
<polygon points="1986,1012 2000,1003 2002,1010 2003,1032 1988,1034" fill="#8a9088"/>
<path d="M2006 1016 L2046 996 M2006 1021 L2046 1001" stroke="#7a5a20" stroke-width="1" fill="none"/>
<polygon points="2032.5,956.6 2113.6,905.6 2118.3,907.9 2116,917.2 2071.9,951.9 2069.6,965.8 2048.8,977.4 2034.9,976.3" fill="#3a3f38" stroke="#000" stroke-width="1"/>
<polygon points="2040,958 2110,912 2111,917 2042,964" fill="#6a8a4a"/>
<polygon points="2046,964 2066,954 2066,964 2048,972" fill="#8a9a88"/>
<polygon points="2076.6,947.3 2104.4,928.8 2111.3,933.4 2110.2,947.3 2088.2,961.2 2076.6,970.5" fill="#6b4310" stroke="#000" stroke-width="1"/>
<path d="M2090 944 V952 Q2095 956 2100 948 V938" fill="#202822" stroke="#000" stroke-width="0.800"/>
<polygon points="2118.3,905.6 2148.4,887.1 2150.7,894 2141.4,907.9 2120.6,917.2" fill="#2f5a30" stroke="#000" stroke-width="1"/>
<polygon points="2124,902 2148,888 2149,893 2138,900 2132,905" fill="#7fb85a"/>
</g>

<clipPath id="pl"><polygon points="1463.5,184.2 2246.0,829.7 1820.0,1075.5 1037.5,430.0"/></clipPath>
<g clip-path="url(#pl)" shape-rendering="crispEdges">
<rect x="1030" y="176" width="1226" height="910" fill="#e80018"/>
<path fill="#f21400" d="M1030,176 1374.5,176 1366,185 1326,221.5 1318,227 1306,232.5 1290,236.5 1282,237.5 1224,237 1200,239 1176,243.5 1162,247.5 1142,255 1124,263.5 1102,276.5 1086,288 1076,296.5 1064,308.5 1049,328 1040.5,344 1036,356 1033,368 1031,382 1031.5,396 1034,409 1038.5,424 1043,434 1051.5,448 1061,460 1074,473 1092,487.5 1118,504.5 1164,531.5 1174,536.5 1200,546 1270,576 1280,581 1287.5,586 1302,599.5 1314.5,604 1324.5,610 1354.5,624 1366,628 1380,631 1398,631.5 1414,628.5 1422,627.5 1428,628 1436,626.5 1464,610 1472,608 1488,608 1504,602 1528,599.5 1546,596.5 1568,596.5 1572,599 1572.5,602 1565.5,614 1560,644 1554,659.5 1549,668 1541,678 1523,694 1517.5,700 1513,708 1512.5,714 1514.5,722 1517.5,728 1533,752 1551.5,784 1569.5,812 1594.5,846 1599.5,858 1600,870 1583.5,926 1550,1006 1534.5,1048 1523,1084 1030,1084 1030,176ZM1590,176 1865,176 1883.5,202 1897.5,224 1910,246 1922,270 1937.5,306 1948,334 1971.5,406 1986,460 1989.5,478 1992,504 1991.5,518 1988,536 1984,545.5 1978.5,554 1969.5,562 1960,567 1940,573 1922,575.5 1878,574 1866,572.5 1848,568 1834,561 1820,551 1815,546 1803.5,530 1796,526 1782,522.5 1772,522 1758,524.5 1748,527.5 1736,528.5 1716,533 1708,533 1704,532 1702,530.5 1700,526 1700,518 1701,514 1715,482 1719,468 1720,456 1718,448 1716,444 1706,434.5 1670,416.5 1654,406.5 1616.5,378 1598,362.5 1593.5,358 1584,340 1566,314 1562.5,304 1558,300.5 1552,299.5 1548,297 1544,293 1541.5,288 1540,282 1541,272 1545,266 1555,260 1557.5,258 1560,254 1571.5,218 1590,176ZM1342.5,352 1348,351 1366,352 1378,357 1384,362 1387,368 1386.5,374 1384,379 1378,385 1363.5,396 1358,399 1328,406.5 1314,414 1308,416 1300,416.5 1294.5,414 1294,409.5 1295.5,406 1303,396 1310.5,382 1318,371 1330,358 1342.5,352ZM2032,634 2054,632 2084,634 2096,636 2120,642 2144,651.5 2166,664.5 2184,679 2201,696 2223.5,722 2236,739.5 2245,756 2249.5,768 2254,788 2254,808 2251.5,822 2251.5,830 2254,839 2254,875 2246,892 2240.5,900 2230,911 2220,918.5 2202,928.5 2186,935 2140,950 2118.5,956 2052,971.5 2032,974.5 1936,981 1912,980 1866,974.5 1845,970 1834,966.5 1810,956.5 1794,948 1785,942 1780,937.5 1775,930 1773.5,924 1774,915.5 1776,908 1781,896 1799.5,862 1802,850 1802,818 1807,796 1816.5,774 1829.5,754 1853.5,728 1890,699 1900,690 1906,681.5 1912,668.5 1920,661 1934,655 1942,653 1970,649 1990,647.5 1996,646 2014,638 2032,634Z"/>
<path fill="#f83c00" d="M1030,176 1306.5,176 1300,181 1292,184.5 1282,187 1272,188 1248,186.5 1218,182 1184,178.5 1152,178 1126,180 1104,183.5 1072,192 1048,201.5 1030,210.5 1030,176ZM1717,260 1724,259 1746,260 1766,265.5 1786,275.5 1802.5,288 1814.5,300 1824,311.5 1838.5,334 1853.5,366 1864,396 1875,434 1884,476 1885.5,490 1885,510 1877.5,542 1874,548 1869.5,552 1864,554.5 1858,555.5 1854,555.5 1843.5,552 1837,548 1824,537.5 1809.5,522 1806,520 1792,516.5 1782,515 1772,515 1752,519 1736,519.5 1725.5,518 1722,516 1720.5,512 1720.5,508 1723,498 1729.5,482 1735.5,454 1735.5,448 1732.5,440 1723,430 1716,424.5 1688,409.5 1662.5,392 1636,370 1628,362 1622,354 1619,348 1617.5,342 1618,329.5 1619.5,324 1622,321 1634,317 1642.5,304 1651,294 1658,287.5 1670,278.5 1690,267.5 1704,262.5 1717,260ZM1030,518 1062,533 1098,545.5 1140,556 1178,563 1200,568.5 1226,579.5 1260,592 1272.5,598 1285,606 1298.5,618 1304,621 1314,623.5 1356,642 1374,646.5 1382,647.5 1396,647.5 1410,645.5 1438,637.5 1464,623.5 1476,620.5 1486,619.5 1506,614 1528,611.5 1540,611.5 1546,613.5 1548,616 1549,620 1549,630 1548,636 1545.5,646 1540.5,656 1534,664.5 1526,672 1500,691.5 1493.5,698 1489.5,706 1489,714 1492.5,724 1508,744 1516,756 1520,764 1526,780 1528,788 1528.5,796 1526.5,802 1522,806 1502.5,814 1495.5,820 1487.5,832 1482.5,844 1478.5,860 1471.5,916 1461,972 1445,1036 1431,1084 1030,1084 1030,518ZM1962.5,666 1992,665.5 2030,668 2076,668 2102,670.5 2119,674 2138,680 2150,686 2164,696 2182.5,714 2214.5,748 2226,764 2232.5,778 2236,794 2236.5,810 2235.5,826 2239,844 2239,856 2235,870 2228,881.5 2218,891.5 2206,899.5 2182,909.5 2116,931.5 2102,935 2066,941 2034,949.5 2012,950.5 1988,953 1962,954 1946,954 1920,952 1910,954 1890,955.5 1860,960 1848,957 1838,950.5 1829,940 1816,927 1812.5,922 1810.5,916 1810.5,910 1812.5,902 1815.5,896 1820.5,888 1836,868 1847.5,844 1850.5,834 1850.5,822 1852.5,810 1855,798 1858,790 1871.5,766 1885.5,748 1896,737 1908,727 1920,714 1932.5,686 1939.5,674 1948,669 1962.5,666Z"/>
<path fill="#ff6a00" d="M1762,452 1768,450 1776,451.5 1790,459.5 1800,467.5 1808,476.5 1813,486 1814,494 1812,499 1806,503.5 1798,505 1770,506.5 1756,509.5 1748,509 1742,507 1739,504 1738.5,498 1742.5,484 1752,461.5 1758.5,454 1762,452ZM1030,578 1066,585.5 1092,589 1164,594 1188,597.5 1208,603 1248,617.5 1260,623.5 1283.5,640 1294,645.5 1306,648.5 1324,649 1336,652 1350,657.5 1364,661 1372,662 1384,662 1410,658.5 1444,644.5 1466,633.5 1494,626.5 1506,624.5 1520,624 1527.5,626 1531.5,630 1533,634 1533,640 1530.5,648 1526,655 1521.5,660 1507,672 1496,678.5 1478,692 1472,698 1467,706 1464.5,716 1465,724 1466,728 1470,736 1478,747 1480.5,752 1481,756 1480,759.5 1476,762.5 1468,762.5 1440,757 1434,757 1426,759 1416.5,764 1407.5,772 1399,784 1391,800 1384.5,818 1376.5,850 1372,876 1364.5,936 1357.5,982 1350,1020 1333.5,1084 1030,1084 1030,578ZM1972.5,682 1984,680.5 1996,681 2050,689.5 2116,697.5 2126,699.5 2136,703 2147.5,710 2160.5,722 2179,744 2204,767 2213.5,780 2216,786 2218.5,798 2218.5,806 2215.5,824 2217,832 2221.5,844 2220,854 2216,861.5 2208,870.5 2202,875 2192,880.5 2122,906.5 2100,913.5 2068,917.5 2024,926.5 1988,931.5 1922,935.5 1896,938 1882,937.5 1876,935 1870,928 1866,917.5 1856,898 1855,890 1857,882 1864.5,868 1890,829.5 1900,802 1913.5,776 1919.5,766 1945.5,730 1949.5,720 1952,704 1955,694 1962,686.5 1972.5,682Z"/>
<path fill="#ff8c00" d="M1495.5,638 1506,637.5 1512.5,640 1514,643 1513.5,648 1506.5,658 1494,667.5 1464,683 1454,691 1442,702.5 1434,708 1428,710 1416,710 1396,704 1390,701.5 1385,698 1383.5,694 1384,692 1386,688.5 1389,686 1398,682 1414,677 1422,673 1439,660 1446,656 1456,653 1480,641.5 1495.5,638ZM1030,640 1030,638.5 1064,641 1156,640.5 1178,642.5 1200,647 1210,650 1232,659 1264,677 1282,686 1302,694 1314,700 1322,705.5 1326.5,710 1330,716 1331,720 1331,728 1328.5,738 1311,788 1298.5,830 1261.5,982 1247,1034 1231,1084 1030,1084 1030,640ZM1995,698 2012,697.5 2020,698.5 2044,703.5 2092,716 2122.5,718 2130,720 2136,723 2142,727.5 2169,760 2192,782.5 2197,790 2198.5,796 2198.5,804 2196,818 2193.5,842 2191,850 2186.5,856 2166,869 2146,879 2128,886 2092,896 2028,907.5 1960,916.5 1952,916.5 1934,918.5 1922,918.5 1912,915 1909,912 1906.5,906 1901.5,884 1897,870 1897,864 1899,856 1902,851 1916.5,834 1936,808 1948,787.5 1966,760.5 1970,752 1972,744.5 1974.5,720 1976,713.5 1978.5,708 1984,702.5 1992,698.5 1995,698Z"/>
<path fill="#ffa000" d="M2014.5,716 2020,714.5 2040,716 2070,724 2094,732 2108,734.5 2126,735.5 2132,739 2156.5,764 2168.5,780 2178,796 2180.5,806 2179,822 2175,834 2167.5,846 2162,852 2152,860 2132,870 2104,878.5 2066,886 2002,895.5 1966,899 1956,899 1948,896.5 1945.5,894 1943.5,890 1941.5,882 1938,854 1939.5,842 1944,836 1956,830.5 1963,826 1982,806.5 1983.5,804 1986,796.5 1991,772 1995,760 1998.5,732 2002.5,724 2008,719 2014.5,716ZM1030,724 1030,722 1032,722 1110,725.5 1130,728 1150,733 1166,740.5 1178,750.5 1186,762.5 1188.5,768 1191.5,780 1192.5,802 1191,818 1185.5,848 1175.5,888 1160.5,940 1146,986 1130.5,1032 1111.5,1084 1030,1084 1030,724Z"/>
<path fill="#ffb400" d="M2040.5,732 2048,731.5 2062,734 2074,737 2098,746 2128,752.5 2138,758 2147,766 2153.5,774 2162,790 2166,806 2166,816 2162,830 2156,839.5 2150,846 2138,853.5 2122,860 2064,872 2004,880.5 1996,880.5 1986,878.5 1982,876.5 1979.5,874 1978,872 1976.5,866 1976,842 1977.5,834 1980,829 1983,826 2001,814 2009.5,806 2012,798 2012.5,786 2020,746.5 2022.5,742 2026.5,738 2036,733 2040.5,732Z"/>
<path fill="#ffc80a" d="M2061,748 2068,747.5 2076,749.5 2088,755.5 2100,759 2126,762 2132,764.5 2142,772 2148,780 2152,788 2155,802 2155,816 2152.5,826 2149.5,832 2143,840 2128,848.5 2104,853 2084,855 2078,856.5 2026,862 2014,860 2010,857.5 2008,854 2006.5,844 2008.5,832 2012,827 2023,820 2028,815 2031,810 2032.5,804 2035,780 2037.5,768 2040,761.5 2044,756 2048,753 2054,750 2061,748Z"/>
<path fill="#ffd820" d="M2083.5,772 2100,770 2120,771.5 2132,776.5 2139.5,784 2143.5,792 2146,802 2146,812 2144,822 2141,828 2134,835.5 2126,840 2118,842 2100,843.5 2092,843 2070,837.5 2064,834 2057,828 2052.5,820 2050.5,810 2051.5,800 2054,792.5 2058,786 2067,778 2076,773.5 2083.5,772Z"/>
<path fill="#ffe838" d="M2093,780 2098,779 2110,779 2122,781.5 2130,786.5 2134.5,792 2138,802 2138,814 2134,824 2126,831.5 2118,834.5 2110,835.5 2094,835 2086,833 2076,828.5 2069,822 2065,812 2065,804 2067.5,796 2072,790 2077,786 2084,782.5 2093,780Z"/>
<path fill="#fff050" d="M2099,786 2108,785.5 2116,786.5 2122,789 2127.5,794 2130,798.5 2131.5,804 2131.5,812 2128,821 2122.5,826 2118,828 2110,829.5 2096,829 2084,825 2076.5,818 2074.5,814 2074,810 2074,806 2076.5,798 2079.5,794 2084,790.5 2088,788.5 2099,786Z"/>
<path fill="#fff778" d="M2104.5,792 2110,792 2118,794.5 2122,798 2124,802 2125,806 2124,814 2122,818 2116,822 2110,823.5 2102,823.5 2094,822 2088,819 2085,816 2083,812 2083,804 2085,800 2089,796 2094,793.5 2104.5,792Z"/>
<path fill="#fffa96" d="M2103.5,798 2108.5,798 2114,800 2118,806 2117.5,812 2114,816 2110,818 2106,818.5 2100,817.5 2096,815.5 2092,810 2093,804 2094.5,802 2098,799.5 2103.5,798Z"/>
<path fill="#ffffb4" d="M2103,802 2106,801 2110,802 2112.5,804 2114,808 2112,813 2110,814.5 2106,815.5 2099.5,812 2098,808 2098.5,806 2103,802Z"/>
<path fill="#ffffd2" d="M2104,804 2106,803 2110,804.5 2111.5,808 2111.5,810 2110,812 2106,813.5 2102,811 2101,808 2101.5,806 2104,804Z"/>
<path fill="#ffffee" d="M2104,806 2108,805 2110,807.5 2109.5,810 2106,812 2103.5,810 2103,808 2104,806Z"/>
<path fill="#ffffff" d="M2104.5,808 2106,806 2108,806.5 2109,808 2108,810 2106,810.5 2105,810 2104.5,808Z"/>
<path fill="#d80040" d="M1437,178 1438.5,176 1485.5,176 1488,190 1483.5,214 1483,230 1484,238 1486.5,246 1504,261.5 1510,268 1522,290 1530,301 1567,336 1571.5,342 1574.5,348 1577.5,360 1580,365 1584,369.5 1642,413.5 1658,423.5 1686,438 1694.5,444 1699.5,450 1702.5,458 1703,466 1702,474 1698,490 1691,506 1685,530 1685,536 1688,542 1690.5,544 1698,546 1710,546 1768,531.5 1778,531.5 1786,533.5 1794,537.5 1802.5,548 1812,557.5 1824,565.5 1836,571.5 1850,577 1870,582.5 1902,589.5 1926,598 1936,603 1942.5,608 1949.5,614 1955,622 1956,626 1955.5,628 1954,631 1950,634.5 1936,640 1922,643.5 1902.5,650 1896,654.5 1876,676.5 1842,693.5 1817,710 1804.5,720 1792,732 1779.5,746 1766,765 1756,784 1753,792 1748,812 1747,822 1747.5,832 1755.5,862 1757,872 1756.5,884 1754,896 1749.5,910 1748.5,920 1751,932 1754,938 1760,945.5 1770,953.5 1778,958 1806,969.5 1822,974 1834,978.5 1850,982.5 1878,992 1894,998.5 1912,1004 1922,1006.5 1930,1006.5 1964,1003.5 2034,1000 2058,997 2080,993 2130,981.5 2166,971 2202,957.5 2218,949.5 2230,942 2238,936 2254,921 2254,1084 1600.5,1084 1614.5,1028 1635,968 1642,943 1648.5,910 1649.5,890 1647.5,880 1642,868.5 1634,859 1626,846 1618.5,838 1611.5,828 1588,799.5 1569,770 1553.5,742 1550,734 1547.5,724 1547,714 1549.5,704 1569.5,662 1577.5,620 1580,614 1589,602 1591,598 1591.5,594 1589,586 1584,582.5 1576,581 1556,583.5 1546,583.5 1528,586.5 1512,588 1488,594.5 1480,595.5 1468,595 1463.5,596 1450,601 1432,610 1416,609 1396,613 1388,613 1372,611 1348,604 1332,597.5 1315.5,588 1302,582 1293,574 1282.5,568 1220,540.5 1203,530 1199.5,526 1198,522 1198,512 1196,504 1198,499 1204,493.5 1216,486.5 1234,480 1255.5,470 1292,451 1300,448 1328,434 1344,424 1364,414 1373,408 1384,398 1392,394 1396,390.5 1402,380 1404,372 1402.5,362 1398,354 1394,350 1380,340.5 1346.5,330 1318,324 1302,322 1270,322 1248,320.5 1232,318 1228,316 1225,312 1224,308 1225,302 1228,296.5 1237,288 1250,280 1262,275 1294,264.5 1312,255 1332,246.5 1357,226 1366,220 1380,213 1400,205 1418,195.5 1424,191 1437,178ZM1982.5,176 2254,176 2254,720 2234,690.5 2207,658 2193,644 2174,627.5 2154,612.5 2121,590 2105.5,578 2095.5,568 2090,561 2086.5,556 2080.5,544 2075,528 2072,516 2054,420 2033.5,334 2009.5,252 1982.5,176Z"/>
<path fill="#c80064" d="M2072,176 2254,176 2254,661.5 2226,623 2174.5,558 2159.5,534 2149,512 2143,496 2138,480 2130,448 2099,292 2072,176ZM1424,228 1432,228 1442,230.5 1450,234.5 1458,240.5 1474,256.5 1493,270 1501.5,280 1510.5,296 1518,305.5 1532,317.5 1559.5,344 1564.5,352 1568,368 1575,376 1633,422 1669.5,446 1678,454.5 1681.5,460 1685,478 1684.5,492 1680,512.5 1677,522 1676.5,534 1676.5,542 1677.5,546 1682.5,552 1686,554 1696,556.5 1720,558.5 1776,558.5 1786,557.5 1794,559 1810,568 1828,576.5 1856,586 1882,593 1902,600.5 1914.5,608 1921.5,616 1922.5,622 1920.5,626 1914,631 1882,644 1852,659.5 1836,663.5 1820,672 1806,674 1798,678 1792.5,682 1784.5,690 1756,709.5 1736,725.5 1706,754.5 1690,774 1681,788 1676,803 1671,828 1669,832 1666,834.5 1662,834.5 1652,829 1636,814 1624,799 1617,788 1607,768 1601,752 1597.5,738 1594.5,712 1592,662 1587.5,642 1587.5,632 1590,619.5 1592,614 1607,588 1608.5,582 1607,578 1605,576 1600,573.5 1588,570.5 1578,569.5 1566,571 1542,571 1498,576 1478,579.5 1462,580.5 1454,582.5 1440,589.5 1432,591.5 1412,589.5 1398,592.5 1388,592.5 1362,589.5 1340,584 1280,554.5 1268,550 1232,533.5 1222,528 1214.5,520 1213.5,512 1216,507 1226,498.5 1246,488 1278,473.5 1330,447 1374,422 1388,412.5 1404,405.5 1410,400 1415.5,384 1417.5,370 1415.5,360 1412,353.5 1408,348.5 1400,341.5 1384,332 1372,328.5 1356,321.5 1342,318 1324,309.5 1312,305 1306,301 1301,296 1299,288 1302,282 1315,270 1321.5,266 1346,254.5 1364,243 1372,239 1410,229.5 1424,228ZM1695.5,900 1700,900 1704,903.5 1715.5,928 1727.5,946 1742,958 1758,966 1786,976 1852,995.5 1898,1013 1928,1021 1954,1025 2000,1027.5 2034,1027 2068,1024 2118,1015 2162,1003.5 2202,989 2226,977 2238,969.5 2254,957.5 2254,1084 1667,1084 1667,1050 1669,1030 1676,1000 1687.5,970 1689,964 1691,950 1695.5,930 1695.5,924 1692.5,906 1693.5,902 1695.5,900Z"/>
<path fill="#b80088" d="M2151,176 2254,176 2254,583 2250,577.5 2240.5,560 2220.5,518 2212,496 2201.5,462 2192.5,424 2183.5,376 2151,176ZM1419.5,244 1430,242.5 1440,244 1447.5,248 1460,259 1478,271 1484,276 1490.5,284 1495.5,292 1499,300 1507,312 1542,343.5 1550,352 1554,360 1558.5,378 1561.5,382 1567.5,386 1579.5,398 1610,422 1652,452.5 1661.5,462 1666,470 1668,476 1671,492 1670.5,504 1668,514 1668,520 1670,528 1669,548 1670,552.5 1672,556 1676.5,560 1686,564 1720,572.5 1760,577 1772,577 1794,575 1806,577.5 1818,582 1844,588.5 1884,602 1892,606 1900,612.5 1901.5,616 1900,621.5 1896,625 1890,628 1878.5,632 1844,640 1831.5,642 1814,647.5 1788,653 1780,656.5 1766,664.5 1754,668 1736,677 1704,689.5 1680,696 1666,696.5 1658,694.5 1652,691.5 1642,684 1618,659 1610,649 1603,638 1600,626 1600.5,618 1602.5,610 1607,600 1617.5,584 1619,578 1619,576 1616,570.5 1614,568.5 1606,564.5 1586,561 1574,560 1562,560.5 1542,558.5 1496,559.5 1460,562.5 1436,571 1428,571 1412,569 1386,572 1366,571.5 1354,570 1334,564 1276,539.5 1260.5,532 1250.5,526 1244,520 1242.5,516 1243,512 1250,504.5 1280,487.5 1318,468.5 1354,448 1376,438 1388,429.5 1400,423 1415.5,412 1421.5,406 1428.5,390 1430.5,374 1427.5,362 1420.5,350 1408,338.5 1394,330.5 1386,326.5 1368,320.5 1360,316 1348,312.5 1340,308.5 1326,298.5 1321.5,294 1319.5,288 1320.5,284 1326,277.5 1338,270.5 1380,254.5 1402,248 1419.5,244ZM1731.5,980 1740,978 1754,979.5 1788,988 1834,1002.5 1894,1024.5 1902,1026.5 1930,1038.5 1950,1045.5 1968,1050 1988,1053.5 2028,1056.5 2062,1055.5 2094,1052 2120,1047.5 2152,1040 2184,1030 2208,1020.5 2232,1008.5 2254,994.5 2254,1084 1745,1084 1732,1069 1723.5,1056 1718.5,1044 1715.5,1032 1715,1016 1718.5,1000 1725,986 1731.5,980Z"/>
<path fill="#a2009c" d="M2224.5,176 2254,176 2254,398.5 2251,386 2244.5,342 2224.5,176ZM1428,254 1436,254 1444,257 1478,282 1482,286 1487.5,294 1497,314 1502,321.5 1535,354 1538,358 1542,366 1545,376 1549.5,386 1557.5,396 1563.5,406 1581.5,418 1593.5,428 1636,458.5 1648,470.5 1655.5,484 1658.5,496 1659,504 1658,514 1658.5,518 1662.5,526 1663,534 1660.5,544 1657.5,550 1657,554 1658,558 1661,562 1666,565.5 1686,574.5 1698,578.5 1726,584.5 1740,590 1756,591.5 1800,590.5 1820,594 1838,595.5 1858,602.5 1873.5,610 1876,613.5 1875,616 1870,618.5 1862,620.5 1832,624.5 1806,625 1766,624 1750,625 1734,630 1728,633 1716,641.5 1692,650.5 1676,653.5 1660,653 1652,651.5 1638,646 1622,635.5 1614,627 1611,620 1611,608 1614,600 1626,580 1627.5,572 1626,568.5 1622,564 1612,558.5 1596,554.5 1568,550.5 1544,545.5 1518,542 1500,541 1486,541 1458,543 1434,550.5 1408,549 1380,552 1360,551.5 1341.5,548 1324.5,542 1312,536.5 1300,528.5 1294.5,522 1293,518 1294.5,512 1300,506 1314,495.5 1344,475.5 1368,463 1382,459.5 1395,452 1416,435.5 1420.5,428 1430,418 1436.5,408 1442.5,394 1444,386 1444,380 1440,364 1435.5,356 1430,349 1424,343 1412,334.5 1388,322.5 1372,317 1362,311.5 1346,304.5 1339,298 1336,292 1336.5,288 1340,283.5 1348,279 1360,274 1412,257.5 1428,254ZM1768.5,1002 1780,1001.5 1808,1010 1826,1020 1848.5,1038 1854,1040 1868,1041 1886,1045 1900,1050.5 1940,1072 1973.5,1084 1858,1084 1857.5,1078 1852.5,1060 1848,1052.5 1844.5,1050 1842,1049 1828,1047.5 1806,1047 1800,1045.5 1784,1038 1770,1028 1762,1018.5 1760,1012 1762,1006 1764,1004 1768.5,1002ZM2254,1034 2254,1084 2123.5,1084 2164,1073.5 2204,1059.5 2230,1047.5 2254,1034Z"/>
<path fill="#9000ac" d="M1425.5,264 1436,264 1444,267 1458,277.5 1477.5,294 1486.5,312 1491.5,328 1518.5,360 1532,381.5 1536,394 1539,400 1550,413 1557.5,424 1561.5,428 1568,431.5 1580,442.5 1602,455 1619,466 1630,474.5 1637.5,482 1642,488 1647,498 1650,509.5 1651,518 1655.5,528 1655.5,534 1653.5,540 1640,559.5 1638,560.5 1632,560 1616,553 1576,541.5 1544,530 1508,521 1494,519.5 1478,519.5 1468,520.5 1448,520.5 1432,523 1404,523.5 1388,522 1379.5,520 1376,518 1374,515.5 1373,510 1378,502 1390,490.5 1403,482 1413.5,470 1424,461 1429,454 1434.5,444 1442,433.5 1457.5,404 1460.5,392 1460.5,382 1459,374 1455.5,366 1446,352 1440,346 1422,333.5 1392,320 1374,313 1360,305.5 1352,299.5 1350,296 1350,293.5 1352,290 1354.5,288 1368,281.5 1406,269 1425.5,264ZM1641,572 1644,571 1648,571.5 1668,578.5 1677,584 1688,594 1690.5,598 1691.5,604 1688,612 1684,616.5 1676,622.5 1670,625.5 1662.5,628 1652,629.5 1638,626.5 1632,623.5 1623,616 1620.5,612 1619.5,608 1621.5,600 1630,584 1636,576 1641,572ZM2250,1078 2254,1076 2254,1084 2241,1084 2250,1078Z"/>
<path fill="#7400bc" d="M1422,272 1432,271.5 1440,274 1444,276.5 1458.5,290 1466.5,300 1470.5,308 1472.5,316 1472.5,326 1470,335.5 1468,338.5 1464,340 1458,339 1408,323 1388,314.5 1372,306.5 1366,301.5 1364,298 1364.5,296 1365.5,294 1372,289.5 1380,285.5 1402,277.5 1422,272ZM1491,398 1496,396 1502,398.5 1545,444 1564,461.5 1584,472.5 1600,478 1608.5,482 1624,490.5 1634,498 1643,510 1646,522 1648.5,528 1648,536 1644.5,542 1636,550 1632,551 1623.5,550 1604,543 1598,540.5 1584,532 1568,520 1548,507 1530,498 1512,491.5 1488,485 1480.5,482 1474,478 1470.5,474 1468,468.5 1467,462 1467.5,456 1471.5,440 1483.5,408 1487,402 1491,398ZM1643.5,582 1648,581.5 1655.5,584 1663,590 1665,594 1665.5,598 1663.5,604 1661,608 1654,613.5 1650,614.5 1641.5,614 1636,611.5 1631.5,606 1630.5,600 1632,594 1636,587 1640,583.5 1643.5,582Z"/>
<path fill="#5010c0" d="M1420.5,278 1430,277.5 1434,278.5 1442,283 1451,292 1457,302 1459,310 1457.5,318 1454,322 1448.5,324 1442,325 1428,324 1419,322 1410,319.5 1394,313 1385,308 1378,302 1377.5,298 1378.5,296 1384,291.5 1406,282 1420.5,278ZM1591.5,494 1598,493.5 1606,494.5 1618,497.5 1628,502 1634,507 1639,514 1642.5,528 1641.5,536 1636,542.5 1630,545 1626,545 1616,542.5 1602.5,536 1591.5,526 1585.5,518 1581.5,510 1580,504 1580.5,500 1582,498 1588,494.5 1591.5,494ZM1645.5,592 1648,592 1650,593.5 1650.5,596 1650,598 1646,600 1643,598 1642.5,596 1643,594 1645.5,592Z"/>
<path fill="#2c14bc" d="M1417,284 1422,282.5 1430,282.5 1436,285 1444,292.5 1448,298 1449.5,302 1449,310 1446,314.5 1440,318 1436,319 1420,318.5 1404,313.5 1394.5,308 1390,304 1388.5,300 1389,298 1392.5,294 1402,288.5 1417,284ZM1603.5,506 1608,505 1616,505 1620.5,506 1626,508 1633,514 1635,518 1637,528 1636,532.5 1632,537.5 1626,539.5 1618,538.5 1608,534 1603.5,530 1599,524 1596,516 1597.5,510 1600,507.5 1603.5,506Z"/>
<path fill="#0018c0" d="M1418.5,288 1422,287 1428,287 1434,289.5 1437,292 1440,296 1442.5,302 1442,306 1438,311.5 1432,314.5 1428,315 1416,314 1405.5,310 1398.5,304 1397.5,300 1399.5,296 1405.5,292 1418.5,288ZM1609,514 1612,512.5 1618,512 1622,513 1626,515.5 1628.5,518 1630.5,524 1630.5,528 1628,532 1624,534 1618,534 1610,530 1608,528 1605,520 1606.5,516 1609,514Z"/>
<path fill="#0024a4" d="M1421,292 1428,292 1431.5,294 1434.5,298 1435,302 1434,305.5 1432,308 1428,310.5 1422,311.5 1414,310 1407,306 1404.5,302 1406,298 1410,295 1421,292ZM1613.5,520 1616,519 1621,520 1623,522 1623.5,524 1623.5,526 1622,528 1620,529 1614.5,528 1612,524 1612,522 1613.5,520Z"/>
<path fill="#002c8c" d="M1416,298 1420,297 1425,298 1427,300 1426.5,304 1424.5,306 1420,307.5 1414.5,306 1412.5,304 1412,301.5 1412.5,300 1416,298Z"/>
</g>
<polygon points="1463.5,184.2 2246.0,829.7 1820.0,1075.5 1037.5,430.0" fill="none" stroke="#000" stroke-width="1.2"/>
<path d="M2107.500 580.500 V790" stroke="#f4f000" stroke-width="1" fill="none" opacity="0.62"/>
<path d="M2107.500 580.500 L2553 948.500" stroke="#f4f000" stroke-width="1" fill="none" opacity="0.55"/>
<path d="M2107.500 790 V806" stroke="#e03030" stroke-width="1.200" fill="none"/>
<path d="M1428.500 754 V1043" stroke="#b8b8b8" stroke-width="1" fill="none"/>
<g shape-rendering="crispEdges">
<rect x="763" y="160.000" width="30" height="5" fill="#ffffff"/>
<rect x="763" y="164.375" width="30" height="5" fill="#ffffee"/>
<rect x="763" y="168.750" width="30" height="5" fill="#ffffd2"/>
<rect x="763" y="173.125" width="30" height="5" fill="#ffffb4"/>
<rect x="763" y="177.500" width="30" height="5" fill="#fffa96"/>
<rect x="763" y="181.875" width="30" height="5" fill="#fff778"/>
<rect x="763" y="186.250" width="30" height="5" fill="#fff050"/>
<rect x="763" y="190.625" width="30" height="5" fill="#ffe838"/>
<rect x="763" y="195.000" width="30" height="5" fill="#ffd820"/>
<rect x="763" y="199.375" width="30" height="5" fill="#ffc80a"/>
<rect x="763" y="203.750" width="30" height="5" fill="#ffb400"/>
<rect x="763" y="208.125" width="30" height="5" fill="#ffa000"/>
<rect x="763" y="212.500" width="30" height="5" fill="#ff8c00"/>
<rect x="763" y="216.875" width="30" height="5" fill="#ff6a00"/>
<rect x="763" y="221.250" width="30" height="5" fill="#f83c00"/>
<rect x="763" y="225.625" width="30" height="5" fill="#f21400"/>
<rect x="763" y="230.000" width="30" height="5" fill="#e80018"/>
<rect x="763" y="234.375" width="30" height="5" fill="#d80040"/>
<rect x="763" y="238.750" width="30" height="5" fill="#c80064"/>
<rect x="763" y="243.125" width="30" height="5" fill="#b80088"/>
<rect x="763" y="247.500" width="30" height="5" fill="#a2009c"/>
<rect x="763" y="251.875" width="30" height="5" fill="#9000ac"/>
<rect x="763" y="256.250" width="30" height="5" fill="#7400bc"/>
<rect x="763" y="260.625" width="30" height="5" fill="#5010c0"/>
<rect x="763" y="265.000" width="30" height="5" fill="#2c14bc"/>
<rect x="763" y="269.375" width="30" height="5" fill="#0018c0"/>
<rect x="763" y="273.750" width="30" height="5" fill="#0024a4"/>
<rect x="763" y="278.125" width="30" height="5" fill="#002c8c"/>
<rect x="763" y="282.500" width="30" height="5" fill="#003478"/>
<rect x="763" y="286.875" width="30" height="5" fill="#002450"/>
<rect x="763" y="291.250" width="30" height="5" fill="#00102a"/>
<rect x="763" y="295.625" width="30" height="5" fill="#000000"/>
<rect x="763" y="299" width="30" height="1" fill="#000"/></g>
<rect x="765.500" y="283.500" width="14.500" height="14.500" fill="#fff" stroke="#fff" stroke-width="1"/>
<path d="M767 297 V291 Q768 285.500 778.500 285 H767 Z" fill="#3a3a3a"/><path d="M767.500 296 Q768 287 778 285.500" fill="none" stroke="#8a8a8a" stroke-width="1.200"/>
<g font-family="DejaVu Sans, sans-serif" fill="#f0f0f0">
<text x="764.500" y="133.600" font-size="13" font-style="italic" textLength="284" lengthAdjust="spacingAndGlyphs">||Re{EM interpolated H(x,y,z,f0).exp(jβ)}||</text>
<text x="767" y="154" font-size="13" font-style="italic" textLength="119.500" lengthAdjust="spacingAndGlyphs">[dB(3.6e-10A/m)]</text>
<text x="794.500" y="174" font-size="12">0</text>
<text x="794.500" y="298.500" font-size="12">-75</text>
</g>
<defs>
<linearGradient id="gz" x1="0" x2="1"><stop offset="0" stop-color="#000050"/><stop offset=".6" stop-color="#0000b0"/><stop offset="1" stop-color="#000078"/></linearGradient>
<linearGradient id="gx" x1="0" y1="0" x2="1" y2="1"><stop offset="0" stop-color="#a00808"/><stop offset=".5" stop-color="#ff6a6a"/><stop offset="1" stop-color="#a00000"/></linearGradient>
<linearGradient id="gxc" x1="0" y1="0" x2="1" y2="1"><stop offset="0" stop-color="#5a0a0a"/><stop offset=".5" stop-color="#a81010"/><stop offset="1" stop-color="#6a0000"/></linearGradient>
<linearGradient id="gy" x1="1" y1="0" x2="0" y2="1"><stop offset="0" stop-color="#8a6a08"/><stop offset=".45" stop-color="#fff080"/><stop offset="1" stop-color="#8a6400"/></linearGradient>
</defs>
<polygon points="781,1114 785,1114 785,1120 781,1120" fill="#0000a0"/>
<polygon points="783.7,1110 790,1104.500 793,1108 789,1113" fill="#e05050"/>
<polygon points="778.300,1107 783.700,1113.300 770.500,1124 764.500,1117.500" fill="url(#gx)"/>
<polygon points="750.800,1129.900 760.500,1112.500 763,1111.500 772.100,1125 772.100,1129.500 768,1130.500" fill="url(#gxc)"/>
<polygon points="783.700,1113 791,1107.500 803,1117.500 795,1124" fill="#a88410"/>
<polygon points="811.900,1133.800 804.600,1114.100 801,1113.500 791.400,1124 791.400,1128.800 796,1131" fill="url(#gy)"/>
<polygon points="777.900,1099 790.300,1099 790.300,1109.500 784,1112 777.900,1109.500" fill="url(#gz)"/>
<path d="M784.100 1080 L794.900 1093.200 Q795 1098.500 790 1100.200 H778 Q773.200 1098.500 773.600 1093.200 Z" fill="url(#gz)"/>
<g font-family="DejaVu Sans, sans-serif" font-size="9" font-weight="700">
<text x="783" y="1074.500" fill="#1070ff">z</text>
<text x="744.500" y="1133.500" fill="#ff5000">x</text>
<text x="816" y="1137.500" fill="#f0e020">y</text>
</g>

</svg></body></html>
